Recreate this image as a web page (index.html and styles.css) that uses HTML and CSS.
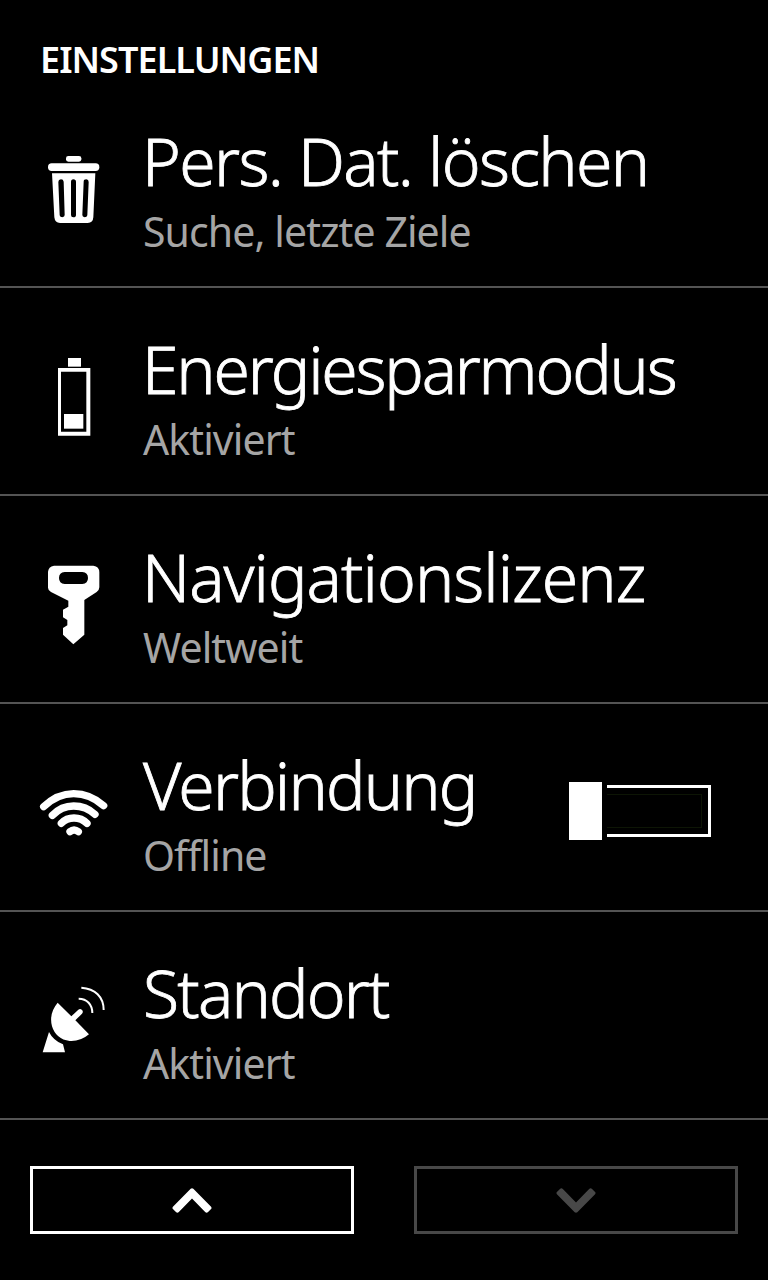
FILE: index.html
```
<!DOCTYPE html>
<html lang="de">
<head>
  <meta charset="utf-8" />
  <meta name="viewport" content="width=device-width,initial-scale=1" />
  <title>Einstellungen</title>
  <link rel="stylesheet" href="styles.css">
</head>
<body>
  <div class="screen">
    <h1>EINSTELLUNGEN</h1>

    <div class="row">
      <svg class="icon" viewBox="0 0 270 300">
        <rect x="108" y="48" width="46" height="17" rx="7" />
        <rect x="54" y="70" width="154" height="23" rx="11" />
        <path fill-rule="evenodd" d="M66 100H196L190 232Q189 249 173 249H90Q75 249 73 232ZM85 126L89 226Q90 232 97 232Q104 231 104 225L101 125Q100 118 93 118Q85 119 85 126ZM123 126V225Q123 232 130 232Q138 232 138 225V126Q138 118 130 118Q123 118 123 126ZM161 125L157 225Q157 231 164 232Q171 232 172 226L176 126Q176 119 169 118Q161 118 161 125Z" />
      </svg>
      <div class="text">
        <div class="title t-delete">Pers. Dat. löschen</div>
        <div class="sub">Suche, letzte Ziele</div>
      </div>
    </div>

    <div class="row">
      <svg class="icon" viewBox="0 9 270 300">
        <rect x="114" y="39" width="39" height="26" />
        <path fill-rule="evenodd" d="M84 69H181V272H84ZM93 80V260H169V80Z" />
        <rect x="102" y="207" width="58" height="44" />
      </svg>
      <div class="text">
        <div class="title t-energy">Energiesparmodus</div>
        <div class="sub">Aktiviert</div>
      </div>
    </div>

    <div class="row">
      <svg class="icon" viewBox="0 3 270 300">
        <path fill-rule="evenodd" d="M72 32H190Q208 34 208 52V97Q208 105 200 111L163 135V239L130 268L99 239V219L112 211V195L99 187V164L115 155V137L63 111Q54 106 54 98V51Q55 35 72 32ZM104 51Q87 52 87 69Q87 86 104 87H157Q174 86 174 69Q174 52 157 51Z" />
      </svg>
      <div class="text">
        <div class="title t-licence">Navigationslizenz</div>
        <div class="sub">Weltweit</div>
      </div>
    </div>

    <div class="row">
      <svg class="icon" viewBox="0 -33 270 300">
        <g class="wave">
          <path d="M41 95Q82 56 131 56T221 92" />
          <path d="M67 121Q94 93 131 93T195 118" />
          <path d="M94 145Q109 129 132 129T171 145" />
          <path d="M120 170Q132 160 145 170" />
        </g>
      </svg>
      <div class="text">
        <div class="title t-network">Verbindung</div>
        <div class="sub">Offline</div>
      </div>
      <div class="toggle">
        <span class="thumb"></span>
        <span class="track"><span class="track-inner"></span></span>
      </div>
    </div>

    <div class="row">
      <svg class="icon" viewBox="0 -9 270 300">
        <path d="M83 83L124 124L145 104Q151 100 156 105Q161 110 156 116L136 136L177 178Q151 200 119 198Q78 193 66 154Q56 115 83 83Z" />
        <path d="M57 171Q70 197 99 208L105 232H38Z" />
        <path class="signal" d="M146 71C171 71 187 89 187 114M154 38C195 41 221 65 221 105" />
      </svg>
      <div class="text">
        <div class="title t-location">Standort</div>
        <div class="sub">Aktiviert</div>
      </div>
    </div>

    <div class="pager">
      <button aria-label="Nach oben">
        <svg class="arrow" viewBox="0 0 120 76"><path d="M2 57L56 2Q60 -1 64 2L118 57Q121 61 118 64L108 74Q104 77 100 73L60 32L20 73Q16 77 12 74L2 64Q-1 61 2 57Z" /></svg>
      </button>
      <button aria-label="Nach unten" disabled>
        <svg class="arrow down" viewBox="0 0 120 76"><path d="M2 57L56 2Q60 -1 64 2L118 57Q121 61 118 64L108 74Q104 77 100 73L60 32L20 73Q16 77 12 74L2 64Q-1 61 2 57Z" /></svg>
      </button>
    </div>
  </div>
</body>
</html>
```
FILE: styles.css
```
* { box-sizing: border-box; }
body {
  margin: 0;
  background: #000; color: #fff;
  font-family: "Noto Sans", "Open Sans", sans-serif;
}
.screen {
  width: 768px; height: 1280px;
  overflow: hidden;
}
h1 {
  margin: 0; height: 80px;
  padding: 35px 0 0 40px;
  font-size: 36px; font-weight: 600;
  line-height: 50px; letter-spacing: -0.95px;
}

/* rows */
.row {
  display: flex; align-items: flex-start;
  height: 208px;
  padding: 0 57px 0 30px;
  border-bottom: 2px solid #545454;
}
.icon {
  width: 90px; height: 100px;
  margin: 60px 22px 0 0;
  flex: none; fill: #fff;
}
.wave { fill: none; stroke: #fff; stroke-width: 22; stroke-linecap: round; }
.signal { fill: none; stroke: #fff; stroke-width: 6; }
.text { flex: 1; padding-top: 40px; white-space: nowrap; }
.title {
  font-size: 66px; font-weight: 300;
  line-height: 80px;
  -webkit-text-stroke: 0.8px #fff;
}
.t-delete { letter-spacing: -1.6px; }
.t-energy { letter-spacing: -2.2px; }
.t-licence { letter-spacing: -0.95px; }
.t-network { margin-left: 1px; letter-spacing: -1.8px; }
.t-location { margin-left: 1px; letter-spacing: -1.8px; }
.sub {
  margin: 3px 0 0 1px;
  font-size: 41px; line-height: 56px;
  letter-spacing: -0.9px;
  color: #a5a5a5;
}

/* switch */
.toggle {
  display: flex; align-items: center;
  width: 142px; height: 58px;
  margin-top: 78px;
}
.thumb { width: 33px; height: 58px; background: #fff; }
.track {
  flex: 1; height: 52px;
  margin-left: 5px; padding: 6px 6px 6px 0;
  border: 3px solid #fff; border-left: 0;
}
.track-inner {
  display: block; height: 100%;
  border: 1px solid #0d1505; border-left: 0;
}

/* page buttons */
.pager {
  display: grid; grid-template-columns: 1fr 1fr;
  gap: 60px; padding: 46px 30px 0;
}
.pager button {
  display: flex; justify-content: center; align-items: center;
  height: 68px; padding: 0;
  background: none; border: 3px solid #fff;
}
.pager button:disabled { border-color: #484848; }
.arrow { width: 40px; height: 25px; fill: #fff; }
.pager button:disabled .arrow { fill: #484848; }
.arrow.down { transform: rotate(180deg); }
```
